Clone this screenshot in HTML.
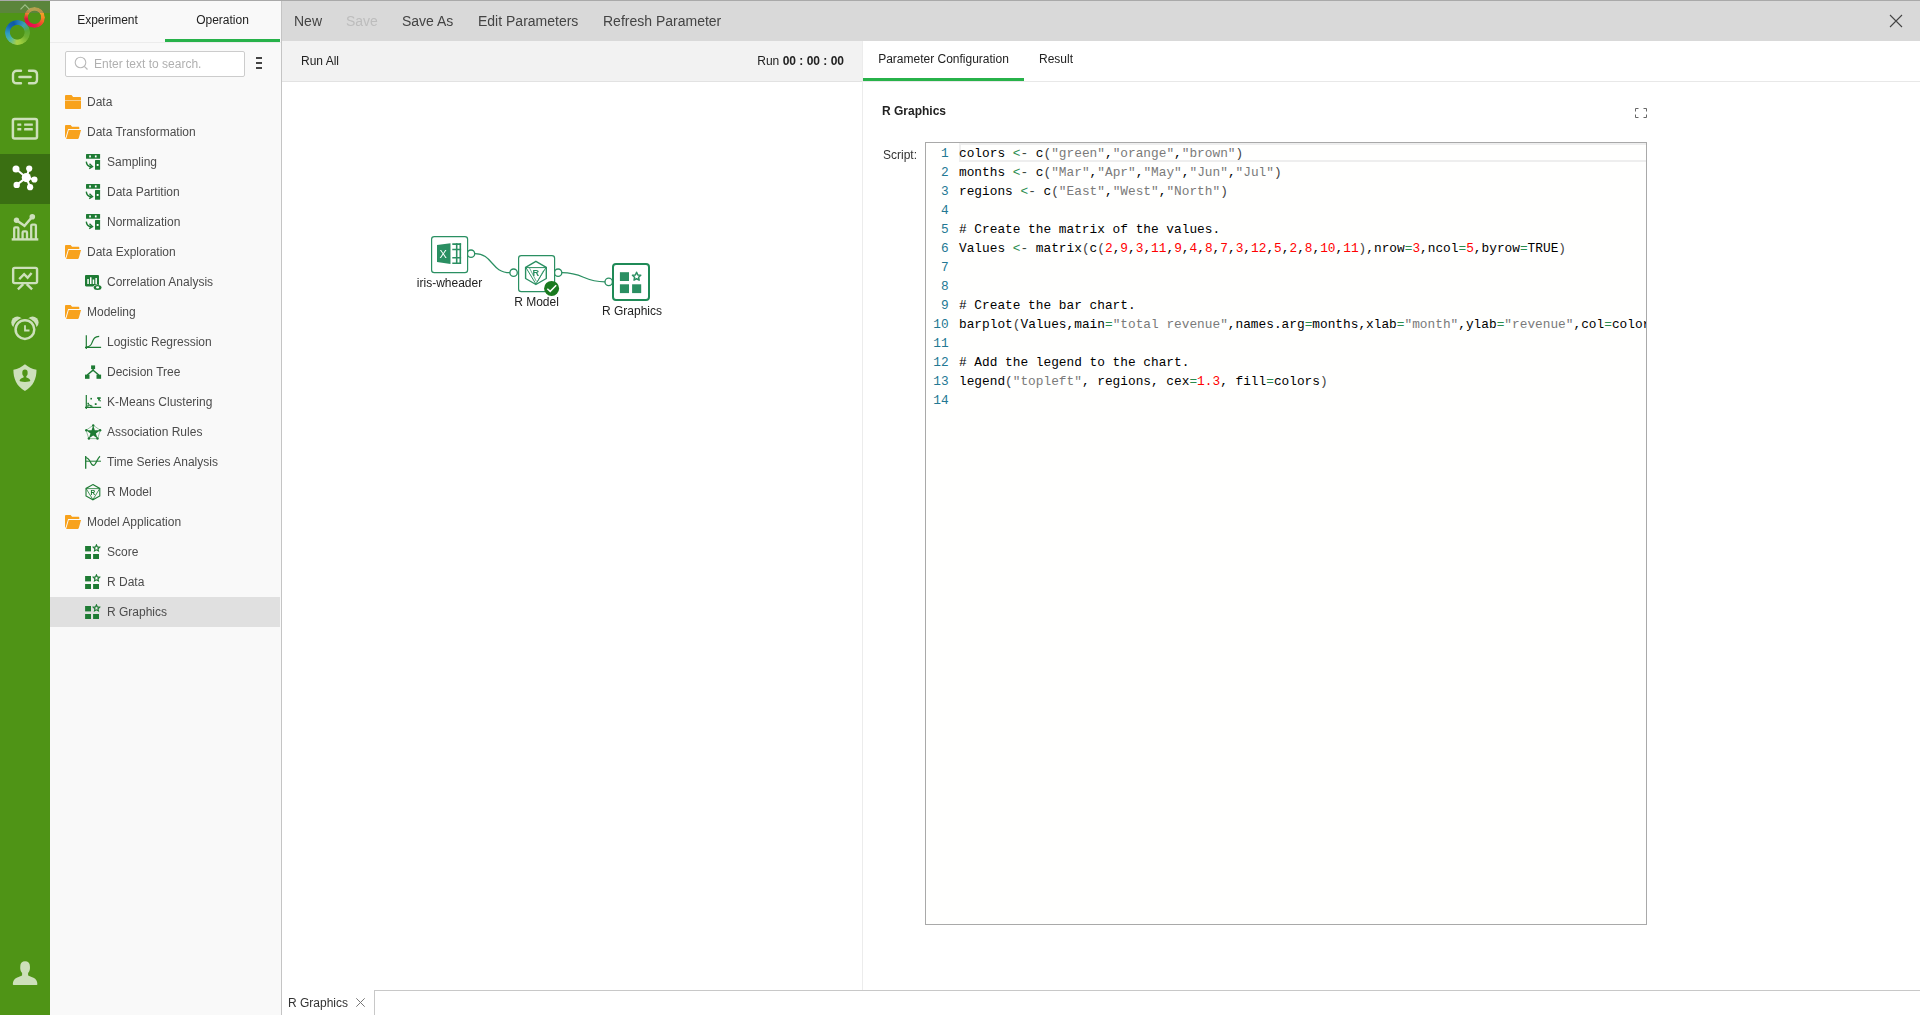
<!DOCTYPE html>
<html><head><meta charset="utf-8"><title>R Graphics</title>
<style>
*{box-sizing:border-box;margin:0;padding:0}
html,body{width:1920px;height:1015px;overflow:hidden;background:#fff;font-family:"Liberation Sans",Arial,sans-serif;font-size:12px;color:#333}
.abs{position:absolute}
#topline{left:0;top:0;width:1920px;height:1px;background:#a9a9a9;z-index:50}
#nav{left:0;top:0;width:50px;height:1015px;background:#4f9416}
#nav .hide{left:0;top:1px;width:50px;height:12px;background:rgba(110,112,112,.42)}
#nav .act{left:0;top:154px;width:50px;height:50px;background:#3a6f12}
#nav svg{position:absolute;left:0}
#sidebg{left:50px;top:0;width:231px;height:1015px;background:#f9f9f9}
#side{left:50px;top:0;width:231px;height:1015px}
.gl{will-change:transform}
#sideborder{left:281px;top:0;width:1px;height:1015px;background:#c4c4c4}
#side .tabs{left:0;top:0;width:231px;height:43px;border-bottom:1px solid #ececec}
#side .tab{position:absolute;top:2px;height:40px;line-height:36px;text-align:center;font-size:12px;color:#222}
#side .tab.on{border-bottom:3px solid #27b24a}
#search{left:15px;top:51px;width:180px;height:26px;border:1px solid #ccc;border-radius:2px;background:#fff;color:#b0b0b0;font-size:12px;line-height:24px;padding-left:28px}
.row{position:absolute;left:0;width:230px;height:30px;line-height:30px;font-size:12px;color:#4c4c4c;white-space:nowrap}
.row.sel{background:#e0e0e0}
.row svg{position:absolute;top:7px}
.row.f svg{left:15px;top:8px}.row.f span{position:absolute;left:37px}
.row.c svg{left:35px}.row.c span{position:absolute;left:57px}
#toolbarbg{left:282px;top:1px;width:1638px;height:40px;background:#d9d9d9}
#toolbar{left:282px;top:1px;width:1638px;height:40px;font-size:14px;color:#444;line-height:40px}
#toolbar span{position:absolute;top:0}
#runbarbg{left:282px;top:41px;width:581px;height:41px;background:#f2f2f2;border-bottom:1px solid #e2e2e2}
#runbar{left:282px;top:41px;width:581px;height:41px;line-height:40px;color:#222}
#canvas{left:282px;top:82px;width:580px;height:908px}
#rp{left:862px;top:41px;width:1058px;height:949px;border-left:1px solid #ececec}
#rp .tabline{left:0;top:40px;width:1058px;height:1px;background:#e8e8e8}
#rp .tab{position:absolute;top:0;height:40px;line-height:36px;text-align:center;font-size:12px;color:#222}
#rp .tab.on{border-bottom:3px solid #27b24a}
#bottom{left:282px;top:990px;width:1638px;height:25px}
.node{position:absolute;width:37px;height:37px;border:1px solid #2d9062;border-radius:4px;background:#fff}
.node svg{position:absolute;left:0;top:0}
.nlabel{position:absolute;font-size:12px;color:#222;white-space:nowrap;transform:translateX(-50%)}
#editor{left:925px;top:142px;width:722px;height:783px;border:1px solid #a9a9a9;background:#fffffe;overflow:hidden;font-family:"Liberation Mono","DejaVu Sans Mono",monospace;font-size:12.8px;line-height:19px}
.ln{position:absolute;left:0;width:22.7px;text-align:right;color:#237893}
.cl{position:absolute;left:33px;white-space:pre;color:#000}
.s{color:#7a7a7a}.n{color:#f00}.o{color:#2a8c4e}.d{color:#3a4640}.b{color:#444}
</style></head><body>
<div id="nav" class="abs"><div class="act abs"></div>
<div class="abs" style="left:5.200px;top:20.100px;width:24.800px;height:24.800px;border-radius:50%;background:conic-gradient(from 0deg,#1f74b8 0deg,#3ea0b4 40deg,#5aa835 80deg,#6fb030 120deg,#9fce40 165deg,#a8d048 185deg,#4ab4a8 230deg,#2f9cc0 265deg,#1463ae 310deg,#0f5aa8 340deg,#1f74b8 360deg);-webkit-mask:radial-gradient(circle at 49% 49%,transparent 6.900px,#000 7.700px);mask:radial-gradient(circle at 49% 49%,transparent 6.900px,#000 7.700px)"></div>
<div class="abs" style="left:23.900px;top:7.100px;width:21.200px;height:21.200px;border-radius:50%;background:conic-gradient(from 0deg,#e6c838 0deg,#f0b02c 40deg,#f58a25 90deg,#f0502a 130deg,#ea1a4a 170deg,#e60f4e 210deg,#d8153e 260deg,#e87a2c 295deg,#ecc038 330deg,#e6c838 360deg);-webkit-mask:radial-gradient(circle at 50% 49%,transparent 6.200px,#000 7px);mask:radial-gradient(circle at 50% 49%,transparent 6.200px,#000 7px)"></div>
<div class="hide abs"></div>
<svg width="50" height="1015" viewBox="0 0 50 1015" style="top:0">
<path d="M20.500 9.300L25 4.800L29.500 9.300" fill="none" stroke="#9fc088" stroke-width="1.200"/>
<!-- link -->
<g fill="none" stroke="#cde0bb" stroke-width="2.400" stroke-linecap="round">
<path d="M21 70.700H16.800C14.600 70.700 13 72.300 13 74.500V79.500C13 81.700 14.600 83.300 16.800 83.300H21"/>
<path d="M29 70.700H33.200C35.400 70.700 37 72.300 37 74.500V79.500C37 81.700 35.400 83.300 33.200 83.300H29"/>
<path d="M19.500 77H30.500" stroke-width="2.600"/></g>
<!-- list -->
<rect x="12.900" y="119.100" width="24.100" height="19.500" rx="1.800" fill="none" stroke="#cde0bb" stroke-width="2.500"/>
<g fill="#cde0bb"><rect x="17.300" y="123.400" width="4" height="2.400" rx=".4"/><rect x="24.100" y="123.400" width="8.750" height="2.400" rx=".4"/><rect x="17.300" y="128.100" width="4" height="2.500" rx=".4"/><rect x="24.100" y="128.100" width="8.750" height="2.500" rx=".4"/></g>
<!-- hub (active) -->
<g stroke="#fff" stroke-width="2" fill="#fff"><path d="M26.300 177.600L16 169M26.300 177.600L29.200 168.600M26.300 177.600L34.400 179.500M26.300 177.600L30.100 187.200M26.300 177.600L16.700 184.900" fill="none"/></g>
<g fill="#fff"><circle cx="26.300" cy="177.600" r="4.600"/><circle cx="16" cy="169" r="3.500"/><circle cx="29.200" cy="168.600" r="3.100"/><circle cx="34.400" cy="179.500" r="3.100"/><circle cx="30.100" cy="187.200" r="3.100"/><circle cx="16.700" cy="184.900" r="3.200"/></g>
<!-- chart -->
<g fill="none" stroke="#cde0bb" stroke-width="2.300"><path d="M11.700 239.400H38.300" stroke-width="2.400"/><path d="M14.200 239V228.500Q14.200 227.400 15.300 227.400H17.300Q18.400 227.400 18.400 228.500V239M22.600 239V232.500Q22.600 231.400 23.700 231.400H25.900Q27 231.400 27 232.500V239M31.200 239V225.800Q31.200 224.700 32.300 224.700H34.800Q35.900 224.700 35.900 225.800V239"/><path d="M16.500 220.300L24.500 225.800L32.300 216.700" stroke-width="2.400"/></g>
<circle cx="16.500" cy="220.300" r="2.700" fill="#cde0bb"/><circle cx="32.300" cy="216.700" r="2.800" fill="#cde0bb"/>
<!-- presentation -->
<g fill="none" stroke="#cde0bb" stroke-width="2.400"><rect x="13.150" y="267.900" width="23.900" height="15.200" rx="1.500"/><path d="M23.300 284.200L17.900 289.300M26.700 284.200L32.100 289.300"/><path d="M19.200 279.100L24.100 274.200L27.600 277.700L31.600 272.900" stroke-linejoin="miter"/></g>
<!-- alarm -->
<circle cx="17.300" cy="322.500" r="6" fill="#cde0bb"/><circle cx="32.600" cy="322.500" r="6" fill="#cde0bb"/>
<circle cx="24.950" cy="329.600" r="11.900" fill="#4f9416"/>
<circle cx="24.950" cy="329.600" r="9.350" fill="none" stroke="#cde0bb" stroke-width="2.500"/>
<path d="M25 325.300V330.500H29.500" fill="none" stroke="#cde0bb" stroke-width="1.800"/>
<!-- shield -->
<path d="M24.950 364.200C28 366.600 32 369.300 36.500 369.800C36.600 378 33.500 386.500 24.950 390.900C16.400 386.500 13.300 378 13.400 369.800C17.900 369.300 21.900 366.600 24.950 364.200Z" fill="#cde0bb"/>
<ellipse cx="24.950" cy="372.900" rx="2.700" ry="3.300" fill="#4f9416"/><rect x="23.600" y="375" width="2.700" height="3.500" fill="#4f9416"/>
<path d="M19.600 380.800C19.600 379 21.500 378.300 23.600 377.500H26.300C28.400 378.300 30.300 379 30.300 380.800C30.300 381.500 28 381.900 24.950 381.900C21.900 381.900 19.600 381.500 19.600 380.800Z" fill="#4f9416"/>
<!-- user -->
<path d="M25.100 961.300C28 961.300 29.900 963.200 29.900 966C30.300 969.500 29.500 971.500 28.100 973V975.300C28.100 975.800 31 976.800 33.500 977.800C36 978.800 37.300 981 37.400 984.300C37.400 984.700 37 984.900 36.600 984.900H13.600C13.200 984.900 12.800 984.700 12.800 984.300C12.900 981 14.200 978.800 16.700 977.800C19.200 976.800 22.100 975.800 22.100 975.300V973C20.700 971.500 19.900 969.500 20.300 966C20.300 963.200 22.200 961.300 25.100 961.300Z" fill="#cde0bb"/>
</svg></div>
<div id="sidebg" class="abs"></div><div id="toolbarbg" class="abs"></div><div id="runbarbg" class="abs"></div>
<div id="side" class="abs gl">
 <div class="tabs abs"><div class="tab" style="left:0;width:115px">Experiment</div><div class="tab on" style="left:115px;width:115px">Operation</div></div>
 <div id="search" class="abs">Enter text to search.</div>
 <svg class="abs" style="left:24px;top:56px" width="16" height="16" viewBox="0 0 16 16"><circle cx="6.500" cy="6.500" r="5.300" fill="none" stroke="#bbb" stroke-width="1.100"/><path d="M10.300 10.300l3.200 3.200" stroke="#bbb" stroke-width="1.200"/></svg>
 <svg class="abs" style="left:205px;top:56px" width="8" height="14" viewBox="0 0 8 14"><path d="M1 2h6M1 7h6M1 12h6" stroke="#444" stroke-width="2"/></svg>
<div class="row f" style="top:87px"><svg width="18" height="16" viewBox="0 0 18 16"><path d="M0 1.2C0 .5.5 0 1.2 0h5.3l1.6 2H15c.6 0 1 .4 1 1v1.900H0z" fill="#f8a21c"/><path d="M0 5.400h16V13c0 .6-.4 1-1 1H1c-.6 0-1-.4-1-1z" fill="#f8a21c"/></svg><span>Data</span></div>
<div class="row f" style="top:117px"><svg width="17.400" height="16" viewBox="0 0 18 16" preserveAspectRatio="none"><path d="M0 1.2C0 .5.5 0 1.2 0h4.6l1.5 1.8h6.5c.6 0 1 .4 1 1V4H3.2L.6 12.5 0 12.6z" fill="#f8a21c"/><path d="M3.9 4.9H16.6l-2.3 8.2c-.1.5-.5.8-1 .8H1.2z" fill="#f8a21c"/></svg><span>Data Transformation</span></div>
<div class="row c" style="top:147px"><svg width="16" height="17" viewBox="0 0 16 17"><rect x="1" y="0" width="14.100" height="4.800" rx=".6" fill="#1e7b34"/><rect x="4.200" y="1.400" width="1.700" height="2" fill="#fff"/><rect x="9.900" y="1.400" width="1.700" height="2" fill="#fff"/><rect x="10" y="6" width="5.100" height="9.800" rx=".6" fill="#1e7b34"/><rect x="11.700" y="10" width="1.900" height="1.900" fill="#fff"/><path d="M1.300 7.600C1.500 10.800 3 12.400 6.300 12.700" fill="none" stroke="#1e7b34" stroke-width="1.400"/><path d="M4.500 9.800L7.500 12.600L4.200 14.600" fill="none" stroke="#1e7b34" stroke-width="1.400"/></svg><span>Sampling</span></div>
<div class="row c" style="top:177px"><svg width="16" height="17" viewBox="0 0 16 17"><rect x="1" y="0" width="14.100" height="4.800" rx=".6" fill="#1e7b34"/><rect x="4.200" y="1.400" width="1.700" height="2" fill="#fff"/><rect x="9.900" y="1.400" width="1.700" height="2" fill="#fff"/><rect x="10" y="6" width="5.100" height="9.800" rx=".6" fill="#1e7b34"/><rect x="11.700" y="10" width="1.900" height="1.900" fill="#fff"/><path d="M1.300 7.600C1.500 10.800 3 12.400 6.300 12.700" fill="none" stroke="#1e7b34" stroke-width="1.400"/><path d="M4.500 9.800L7.500 12.600L4.200 14.600" fill="none" stroke="#1e7b34" stroke-width="1.400"/></svg><span>Data Partition</span></div>
<div class="row c" style="top:207px"><svg width="16" height="17" viewBox="0 0 16 17"><rect x="1" y="0" width="14.100" height="4.800" rx=".6" fill="#1e7b34"/><rect x="4.200" y="1.400" width="1.700" height="2" fill="#fff"/><rect x="9.900" y="1.400" width="1.700" height="2" fill="#fff"/><rect x="10" y="6" width="5.100" height="9.800" rx=".6" fill="#1e7b34"/><rect x="11.700" y="10" width="1.900" height="1.900" fill="#fff"/><path d="M1.300 7.600C1.500 10.800 3 12.400 6.300 12.700" fill="none" stroke="#1e7b34" stroke-width="1.400"/><path d="M4.500 9.800L7.500 12.600L4.200 14.600" fill="none" stroke="#1e7b34" stroke-width="1.400"/></svg><span>Normalization</span></div>
<div class="row f" style="top:237px"><svg width="17.400" height="16" viewBox="0 0 18 16" preserveAspectRatio="none"><path d="M0 1.2C0 .5.5 0 1.2 0h4.6l1.5 1.8h6.5c.6 0 1 .4 1 1V4H3.2L.6 12.5 0 12.6z" fill="#f8a21c"/><path d="M3.9 4.9H16.6l-2.3 8.2c-.1.5-.5.8-1 .8H1.2z" fill="#f8a21c"/></svg><span>Data Exploration</span></div>
<div class="row c" style="top:267px"><svg width="17" height="17" viewBox="0 0 17 17"><path d="M1.200 1h11.600c.7 0 1.200.5 1.200 1.200v8.700a4.500 2.800 0 0 0-5.800 1.600H1.200C.5 12.500 0 12 0 11.300V2.200C0 1.500.5 1 1.200 1z" fill="#1e7b34"/><rect x="2.300" y="5" width="1.500" height="5" fill="#fff"/><rect x="5" y="3.300" width="1.500" height="6.700" fill="#fff"/><rect x="7.700" y="5.500" width="1.500" height="4.500" fill="#fff"/><rect x="10.400" y="4" width="1.500" height="6" fill="#fff"/><ellipse cx="12.600" cy="13.400" rx="3.900" ry="2.500" fill="#1e7b34"/><ellipse cx="12.600" cy="13.400" rx="1.600" ry="1.100" fill="#fff"/></svg><span>Correlation Analysis</span></div>
<div class="row f" style="top:297px"><svg width="17.400" height="16" viewBox="0 0 18 16" preserveAspectRatio="none"><path d="M0 1.2C0 .5.5 0 1.2 0h4.6l1.5 1.8h6.5c.6 0 1 .4 1 1V4H3.2L.6 12.5 0 12.6z" fill="#f8a21c"/><path d="M3.9 4.9H16.6l-2.3 8.2c-.1.5-.5.8-1 .8H1.2z" fill="#f8a21c"/></svg><span>Modeling</span></div>
<div class="row c" style="top:327px"><svg width="17" height="16" viewBox="0 0 17 16"><path d="M1.300 1.200V15M0 13.300h16.100" stroke="#1e7b34" stroke-width="1.200" fill="none"/><path d="M1.300 13C5.800 12.900 6.400 10.300 7.500 7.600S9.600 2.500 14.200 2.400" stroke="#1e7b34" stroke-width="1.200" fill="none"/></svg><span>Logistic Regression</span></div>
<div class="row c" style="top:357px"><svg width="17" height="16" viewBox="0 0 17 16"><rect x="6.100" y="1.400" width="4" height="3.700" fill="#1e7b34"/><rect x="0" y="10.600" width="4.500" height="4.200" fill="#1e7b34"/><rect x="11.500" y="10.600" width="4.600" height="4.200" fill="#1e7b34"/><path d="M8.100 4.500V6.200L2.200 11M8.100 6.200L13.800 11" stroke="#1e7b34" stroke-width="1.500" fill="none"/></svg><span>Decision Tree</span></div>
<div class="row c" style="top:387px"><svg width="17" height="16" viewBox="0 0 17 16"><path d="M1.300 1V15M0 13.400h16.100" stroke="#1e7b34" stroke-width="1.200" fill="none"/><g fill="#1e7b34"><rect x="5.400" y="3.900" width="1.600" height="1.600"/><rect x="12.200" y="3.200" width="1.800" height="1.800"/><rect x="14" y="3.200" width="1.700" height="1.700"/><rect x="13.100" y="4.800" width="1.800" height="1.800"/><rect x="14.600" y="6.200" width="1.200" height="1.200"/><rect x="9.800" y="9.200" width="1.800" height="1.800"/><rect x="2.400" y="8.800" width="1.600" height="1.600"/><rect x="3.200" y="10.300" width="1.600" height="1.600"/><rect x="2.100" y="11.300" width="1.400" height="1.400"/><rect x="5" y="10.900" width="1.600" height="1.600"/><rect x="6.300" y="11.700" width="1.200" height="1.200"/></g></svg><span>K-Means Clustering</span></div>
<div class="row c" style="top:417px"><svg width="17" height="17" viewBox="0 0 17 17"><path d="M8.200 1.200L9.800 6.300L15.300 6.300L10.900 9.400L12.600 14.600L8.200 11.400L3.800 14.600L5.500 9.400L1.100 6.300L6.600 6.300Z" fill="#1e7b34"/><path d="M8.200 1.200L15.300 6.300L12.600 14.600L3.800 14.600L1.100 6.300Z" fill="none" stroke="#1e7b34" stroke-width=".6" opacity=".75"/><g fill="#1e7b34"><circle cx="8.200" cy="1.400" r="1.200"/><circle cx="15.100" cy="6.300" r="1.200"/><circle cx="12.500" cy="14.500" r="1.200"/><circle cx="3.900" cy="14.500" r="1.200"/><circle cx="1.300" cy="6.300" r="1.200"/></g></svg><span>Association Rules</span></div>
<div class="row c" style="top:447px"><svg width="17" height="16" viewBox="0 0 17 16"><path d="M.700 2v12.800" stroke="#1e7b34" stroke-width="1.300" fill="none"/><path d="M.700 3.600C3.500 3.800 4.500 6 5.500 8.300C6.800 11.300 8.800 12.300 10.200 10C11.800 7.500 12.800 4 15 2.200" stroke="#1e7b34" stroke-width="1.200" fill="none"/><path d="M.700 7.200h15.300" stroke="#1e7b34" stroke-width="1" fill="none"/></svg><span>Time Series Analysis</span></div>
<div class="row c" style="top:477px"><svg width="17" height="17" viewBox="0 0 17 17"><path d="M7.900 .6L14.800 4.400V12L7.900 15.800L1 12V4.400Z" fill="none" stroke="#1e7b34" stroke-width="1.100"/><path d="M1 4.600H14.800M1.300 4.900L7.900 15.600M14.500 4.900L7.900 15.600" fill="none" stroke="#1e7b34" stroke-width=".8"/><text x="7.900" y="10.600" font-size="6.500" font-weight="bold" text-anchor="middle" fill="#1e7b34" font-family="Liberation Sans,sans-serif">R</text></svg><span>R Model</span></div>
<div class="row f" style="top:507px"><svg width="17.400" height="16" viewBox="0 0 18 16" preserveAspectRatio="none"><path d="M0 1.2C0 .5.5 0 1.2 0h4.6l1.5 1.8h6.5c.6 0 1 .4 1 1V4H3.2L.6 12.5 0 12.6z" fill="#f8a21c"/><path d="M3.9 4.9H16.6l-2.3 8.2c-.1.5-.5.8-1 .8H1.2z" fill="#f8a21c"/></svg><span>Model Application</span></div>
<div class="row c" style="top:537px"><svg width="16" height="16" viewBox="0 0 16 16"><rect x=".1" y="2" width="5.900" height="5.400" fill="#1e7b34"/><rect x=".1" y="10" width="5.900" height="5" fill="#1e7b34"/><rect x="8.100" y="10" width="5.900" height="5" fill="#1e7b34"/><path d="M11.450 .9l.95 2.020 2.200.27-1.620 1.530.4 2.200-1.930-1.080-1.930 1.080.4-2.200-1.620-1.530 2.200-.27z" fill="none" stroke="#1e7b34" stroke-width="1.200" stroke-linejoin="miter"/></svg><span>Score</span></div>
<div class="row c" style="top:567px"><svg width="16" height="16" viewBox="0 0 16 16"><rect x=".1" y="2" width="5.900" height="5.400" fill="#1e7b34"/><rect x=".1" y="10" width="5.900" height="5" fill="#1e7b34"/><rect x="8.100" y="10" width="5.900" height="5" fill="#1e7b34"/><path d="M11.450 .9l.95 2.020 2.200.27-1.620 1.530.4 2.200-1.930-1.080-1.930 1.080.4-2.200-1.620-1.530 2.200-.27z" fill="none" stroke="#1e7b34" stroke-width="1.200" stroke-linejoin="miter"/></svg><span>R Data</span></div>
<div class="row c sel" style="top:597px"><svg width="16" height="16" viewBox="0 0 16 16"><rect x=".1" y="2" width="5.900" height="5.400" fill="#1e7b34"/><rect x=".1" y="10" width="5.900" height="5" fill="#1e7b34"/><rect x="8.100" y="10" width="5.900" height="5" fill="#1e7b34"/><path d="M11.450 .9l.95 2.020 2.200.27-1.620 1.530.4 2.200-1.930-1.080-1.930 1.080.4-2.200-1.620-1.530 2.200-.27z" fill="none" stroke="#1e7b34" stroke-width="1.200" stroke-linejoin="miter"/></svg><span>R Graphics</span></div>

</div>
<div id="sideborder" class="abs"></div>
<div id="toolbar" class="abs gl"><span style="left:12px">New</span><span style="left:64px;color:#bdbdbd">Save</span><span style="left:120px">Save As</span><span style="left:196px">Edit Parameters</span><span style="left:321px">Refresh Parameter</span>
<svg class="abs" style="right:17px;top:13px" width="14" height="14" viewBox="0 0 14 14"><path d="M1 1l12 12M13 1L1 13" stroke="#444" stroke-width="1.100"/></svg></div>
<div id="runbar" class="abs gl"><span class="abs" style="left:19px">Run All</span><span class="abs" style="right:19px">Run <b>00 : 00 : 00</b></span></div>
<div id="canvas" class="abs gl">
<svg class="abs" style="left:0;top:0" width="580" height="908" viewBox="282 82 580 908">
<g fill="none" stroke="#2a8f62" stroke-width="1.200"><path d="M475 253.700C493 253.700 491 272.700 510 272.700"/><path d="M562 272.700C584 272.700 583 281.900 605 281.900"/></g>
<g fill="#fff" stroke="#2a8f62" stroke-width="1.300"><circle cx="471" cy="253.700" r="3.700"/><circle cx="513.600" cy="272.700" r="3.700"/><circle cx="558.100" cy="272.700" r="3.700"/><circle cx="608.700" cy="281.900" r="3.700"/></g>
<!-- excel node -->
<rect x="431.600" y="236.600" width="36" height="36" rx="2.700" fill="#fff" stroke="#2a8f62" stroke-width="1.200"/>
<path d="M437 245L450.500 243.300V264.100L437 262.100Z" fill="#2a8f62"/>
<text x="443.250" y="258.400" font-size="11" text-anchor="middle" fill="#fff" font-family="Liberation Sans,sans-serif">X</text>
<g fill="none" stroke="#2a8f62" stroke-width="1.600"><path d="M452.300 244.100H461.100M452.300 249.500H461.100M452.300 257.700H461.100M452.300 263.200H461.100"/><path d="M456.700 243.300V264M460.300 243.300V264"/></g>
<!-- rmodel node -->
<rect x="518.600" y="255.600" width="36" height="36" rx="2.700" fill="#fff" stroke="#2a8f62" stroke-width="1.200"/>
<path d="M535.900 261.300L546.300 267.300V278.500L535.900 284.500L525.600 278.500V267.300Z" fill="none" stroke="#2a8f62" stroke-width="1.400" stroke-linejoin="round"/>
<path d="M525.600 267.600H546.300M526.200 268L535.900 284M545.700 268L535.900 284" fill="none" stroke="#2a8f62" stroke-width="1"/>
<path d="M529.500 268L536.400 281.500M543.500 270.500L537.500 281.500" fill="none" stroke="#2a8f62" stroke-width=".7"/>
<text x="535.900" y="276.100" font-size="9.200" font-weight="bold" text-anchor="middle" fill="#2a8f62" font-family="Liberation Sans,sans-serif">R</text>
<circle cx="551.600" cy="288.400" r="7.500" fill="#1a7a1f"/><path d="M547.300 288.700L550.200 291.400L556.200 285.300" fill="none" stroke="#fff" stroke-width="1.500"/>
<!-- rgraphics node -->
<rect x="613" y="264" width="36" height="36" rx="3" fill="#fff" stroke="#1f8a57" stroke-width="2"/>
<g fill="#2a8f62"><rect x="619.900" y="272.200" width="9.100" height="8.800"/><rect x="619.900" y="284.300" width="9.100" height="8.800"/><rect x="632.100" y="284.300" width="9.100" height="8.800"/></g>
<path d="M636.600 272.300l1.250 2.650 2.900.35-2.130 2 .54 2.870-2.560-1.400-2.560 1.400.54-2.870-2.130-2 2.900-.35z" fill="#fff" stroke="#2a8f62" stroke-width="1.500" stroke-linejoin="round"/>
</svg>
<div class="nlabel" style="left:167.500px;top:194px">iris-wheader</div>
<div class="nlabel" style="left:254.500px;top:213px">R Model</div>
<div class="nlabel" style="left:350px;top:222px">R Graphics</div>
</div>
<div id="rp" class="abs gl"><div class="tabline abs"></div>
 <div class="tab on" style="left:0;width:161px">Parameter Configuration</div><div class="tab" style="left:161px;width:64px">Result</div>
 <div class="abs" style="left:19px;top:63px;font-weight:bold;color:#222">R Graphics</div>
 <svg class="abs" style="left:772px;top:67px" width="12" height="10" viewBox="0 0 12 10"><path d="M.500 3.500V.500H3.500M8.500 .500h3v3M11.500 6.500v3H8.500M3.500 9.500H.500v-3" fill="none" stroke="#666" stroke-width="1"/></svg>
 <div class="abs" style="left:20px;top:107px;color:#333">Script:</div>
</div>
<div id="editor" class="abs"><div class="abs" style="left:33px;top:0;width:700px;height:19px;border:2px solid #eee"></div><div class="ln" style="top:1px">1</div><div class="cl" style="top:1px">colors <span class="o">&lt;</span><span class="d">-</span> c<span class="b">(</span><span class="s">&quot;green&quot;</span>,<span class="s">&quot;orange&quot;</span>,<span class="s">&quot;brown&quot;</span><span class="b">)</span></div><div class="ln" style="top:20px">2</div><div class="cl" style="top:20px">months <span class="o">&lt;</span><span class="d">-</span> c<span class="b">(</span><span class="s">&quot;Mar&quot;</span>,<span class="s">&quot;Apr&quot;</span>,<span class="s">&quot;May&quot;</span>,<span class="s">&quot;Jun&quot;</span>,<span class="s">&quot;Jul&quot;</span><span class="b">)</span></div><div class="ln" style="top:39px">3</div><div class="cl" style="top:39px">regions <span class="o">&lt;</span><span class="d">-</span> c<span class="b">(</span><span class="s">&quot;East&quot;</span>,<span class="s">&quot;West&quot;</span>,<span class="s">&quot;North&quot;</span><span class="b">)</span></div><div class="ln" style="top:58px">4</div><div class="cl" style="top:58px"></div><div class="ln" style="top:77px">5</div><div class="cl" style="top:77px"># Create the matrix of the values.</div><div class="ln" style="top:96px">6</div><div class="cl" style="top:96px">Values <span class="o">&lt;</span><span class="d">-</span> matrix<span class="b">(</span>c<span class="b">(</span><span class="n">2</span>,<span class="n">9</span>,<span class="n">3</span>,<span class="n">11</span>,<span class="n">9</span>,<span class="n">4</span>,<span class="n">8</span>,<span class="n">7</span>,<span class="n">3</span>,<span class="n">12</span>,<span class="n">5</span>,<span class="n">2</span>,<span class="n">8</span>,<span class="n">10</span>,<span class="n">11</span><span class="b">)</span>,nrow<span class="o">=</span><span class="n">3</span>,ncol<span class="o">=</span><span class="n">5</span>,byrow<span class="o">=</span>TRUE<span class="b">)</span></div><div class="ln" style="top:115px">7</div><div class="cl" style="top:115px"></div><div class="ln" style="top:134px">8</div><div class="cl" style="top:134px"></div><div class="ln" style="top:153px">9</div><div class="cl" style="top:153px"># Create the bar chart.</div><div class="ln" style="top:172px">10</div><div class="cl" style="top:172px">barplot<span class="b">(</span>Values,main<span class="o">=</span><span class="s">&quot;total revenue&quot;</span>,names.arg<span class="o">=</span>months,xlab<span class="o">=</span><span class="s">&quot;month&quot;</span>,ylab<span class="o">=</span><span class="s">&quot;revenue&quot;</span>,col<span class="o">=</span>colors<span class="b">)</span></div><div class="ln" style="top:191px">11</div><div class="cl" style="top:191px"></div><div class="ln" style="top:210px">12</div><div class="cl" style="top:210px"># Add the legend to the chart.</div><div class="ln" style="top:229px">13</div><div class="cl" style="top:229px">legend<span class="b">(</span><span class="s">&quot;topleft&quot;</span>, regions, cex<span class="o">=</span><span class="n">1.3</span>, fill<span class="o">=</span>colors<span class="b">)</span></div><div class="ln" style="top:248px">14</div><div class="cl" style="top:248px"></div></div>
<div id="bottom" class="abs gl"><div class="abs" style="left:6px;top:6px;color:#333">R Graphics</div>
<svg class="abs" style="left:74px;top:8px" width="9" height="9" viewBox="0 0 9 9"><path d="M.300 .300l8.400 8.400M8.700 .300l-8.400 8.400" stroke="#777" stroke-width="1"/></svg>
<div class="abs" style="left:92px;top:0;width:1546px;height:25px;border-top:1px solid #c8c8c8;border-left:1px solid #c8c8c8"></div></div>
<div id="topline" class="abs"></div>
</body></html>
